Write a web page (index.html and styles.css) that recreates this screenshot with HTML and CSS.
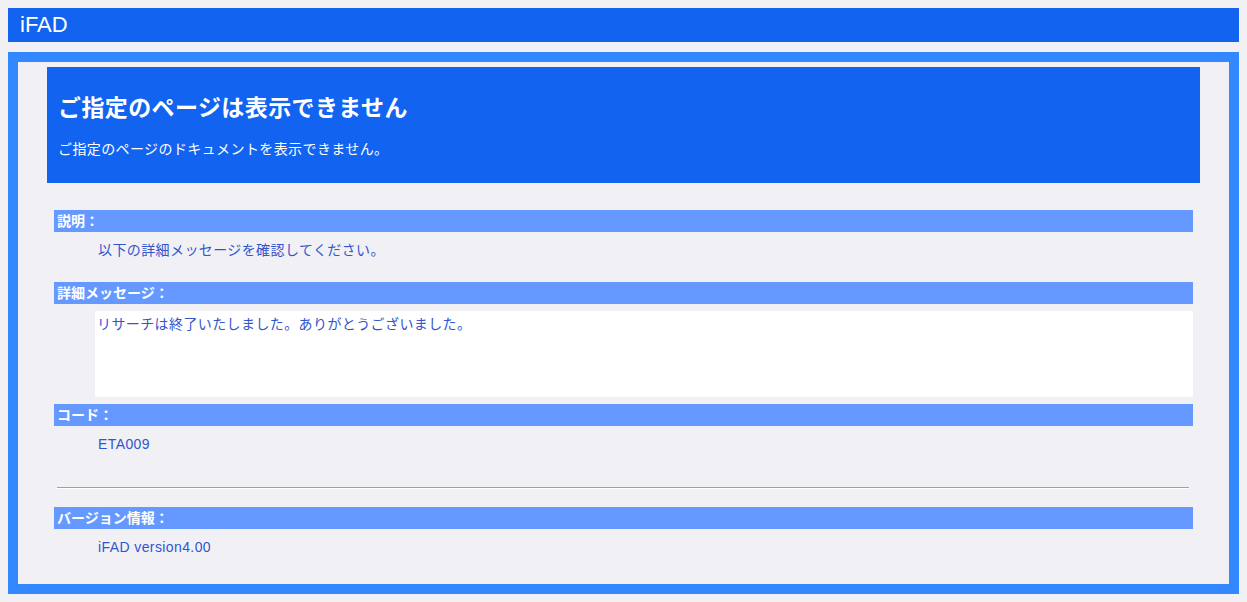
FILE: index.html
```html
<!DOCTYPE html>
<html lang="ja">
<head>
    <meta charset="UTF-8">
    <title>iFAD - エラー</title>
    <link rel="stylesheet" href="styles.css">
</head>
<body>

    <!-- Top bar -->
    <div class="topbar">iFAD</div>

    <!-- Main frame -->
    <div class="frame">
        <div class="title-box">
            <h1>ご指定のページは表示できません</h1>
            <p>ご指定のページのドキュメントを表示できません。</p>
        </div>

        <div class="sections">
            <div class="label">説明：</div>
            <p class="value">以下の詳細メッセージを確認してください。</p>

            <div class="label">詳細メッセージ：</div>
            <div class="message">リサーチは終了いたしました。ありがとうございました。</div>

            <div class="label">コード：</div>
            <p class="value">ETA009</p>

            <hr>

            <div class="label">バージョン情報：</div>
            <p class="value">iFAD version4.00</p>
        </div>
    </div>

</body>
</html>
```

FILE: styles.css
```css
body {
    margin: 8px;
    background-color: #f0f0f5;
    font-family: "Liberation Sans", "Noto Sans CJK JP", sans-serif;
    font-size: 14px;
    letter-spacing: 0.4px;
    color: #3355cc;
}

/* Top bar */
.topbar {
    height: 34px;
    line-height: 34px;
    padding-left: 12px;
    background-color: #1163f0;
    color: #fff;
    font-size: 22px;
    letter-spacing: 0;
}

/* Outer frame */
.frame {
    margin-top: 10px;
    height: 522px;
    border: 10px solid #3388ff;
    background-color: #f0f0f5;
}

.title-box {
    margin: 5px 29px 0;
    height: 116px;
    box-sizing: border-box;
    padding: 27px 11px 0;
    background-color: #1163f0;
    color: #fff;
}

.title-box h1 {
    margin: 0;
    font-size: 23px;
    line-height: 28px;
    font-weight: bold;
}

.title-box p {
    margin: 17px 0 0;
    line-height: 20px;
}

/* Detail sections */
.sections {
    padding: 27px 36px 0;
}

.label {
    height: 22px;
    line-height: 22px;
    padding-left: 3px;
    background-color: #6699ff;
    color: #fff;
    font-weight: bold;
    letter-spacing: 0;
}

.value {
    margin: 8px 0 22px 44px;
    line-height: 20px;
}

.message {
    margin: 7px 0 7px 41px;
    height: 86px;
    box-sizing: border-box;
    padding: 4px 2px;
    line-height: 18px;
    background-color: #fff;
}

hr {
    margin: 33px 4px 18px 3px;
    border: none;
    border-top: 1px solid #a0a0a0;
    border-bottom: 1px solid #fff;
}
```
